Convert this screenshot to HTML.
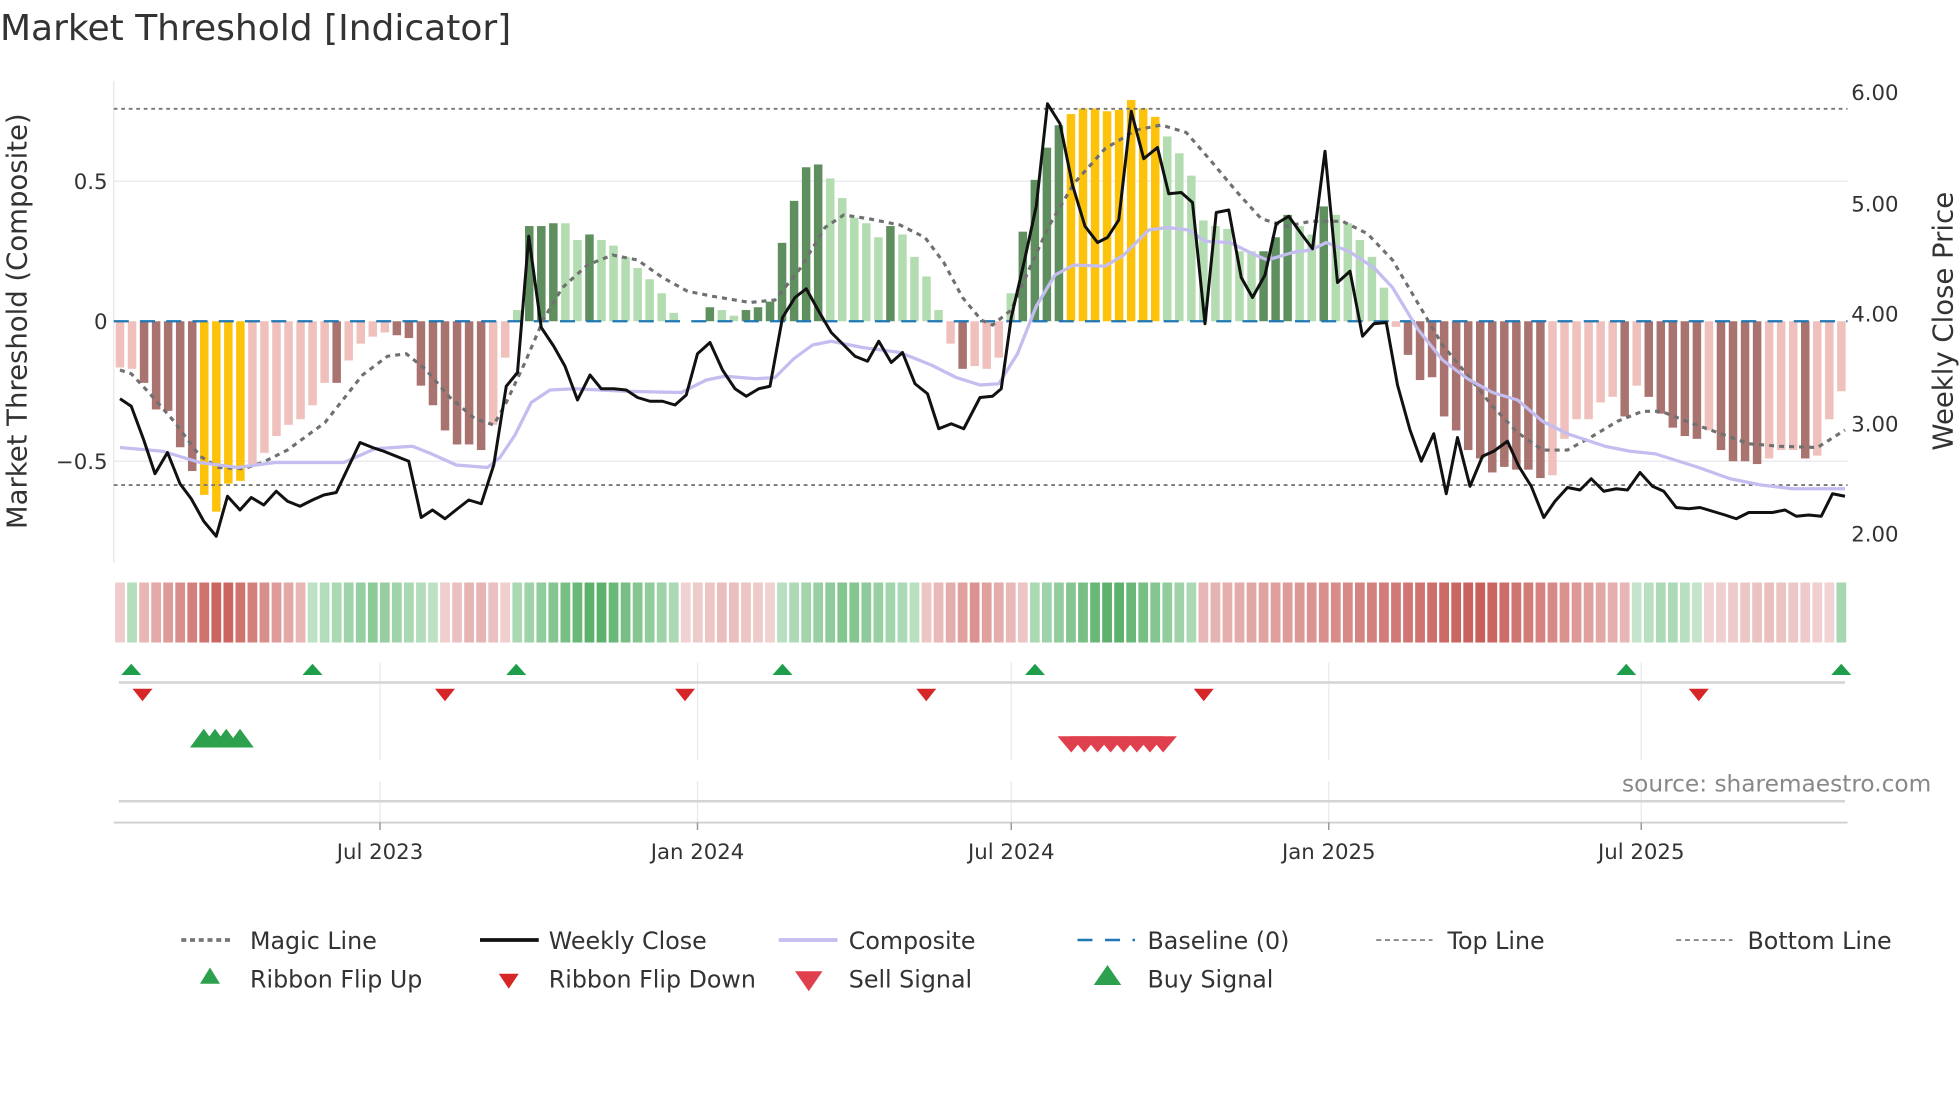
<!DOCTYPE html>
<html><head><meta charset="utf-8">
<style>html,body{margin:0;padding:0;background:#fff;}svg{display:block;}text{font-family:"DejaVu Sans","Liberation Sans",sans-serif;}</style>
</head><body>
<svg id="s" width="1960" height="1102" viewBox="0 0 1568 881.6" xmlns="http://www.w3.org/2000/svg">
<rect width="1568" height="881.6" fill="#fff"/>
<text x="0" y="32" font-size="28.8" fill="#333">Market Threshold [Indicator]</text>
<line x1="91" y1="65" x2="91" y2="450" stroke="#e6e6e6" stroke-width="1"/>
<line x1="91" y1="145" x2="1478" y2="145" stroke="#ebebf2" stroke-width="1.2"/>
<line x1="91" y1="369" x2="1478" y2="369" stroke="#ebebf2" stroke-width="1.2"/>
<g id="bars"></g>
<line x1="91" y1="87" x2="1478" y2="87" stroke="#777" stroke-width="1.5" stroke-dasharray="3,3"/>
<line x1="91" y1="388" x2="1478" y2="388" stroke="#777" stroke-width="1.5" stroke-dasharray="3,3"/>
<line x1="91" y1="257" x2="1478" y2="257" stroke="#1f77b4" stroke-width="1.8" stroke-dasharray="12,9"/>
<g id="lines"></g>
<g font-size="17" fill="#333">
<text x="86" y="151" text-anchor="end">0.5</text>
<text x="86" y="263" text-anchor="end">0</text>
<text x="86" y="375" text-anchor="end">−0.5</text>
<text x="1481" y="80">6.00</text>
<text x="1481" y="169">5.00</text>
<text x="1481" y="257">4.00</text>
<text x="1481" y="345">3.00</text>
<text x="1481" y="433">2.00</text>
</g>
<text transform="translate(21,257) rotate(-90)" text-anchor="middle" font-size="22" fill="#333">Market Threshold (Composite)</text>
<text transform="translate(1562,257) rotate(-90)" text-anchor="middle" font-size="22" fill="#333">Weekly Close Price</text>
<g id="ribbon"></g>
<g stroke="#e8e8ee" stroke-width="1">
<line x1="304" y1="530" x2="304" y2="608"/><line x1="558" y1="530" x2="558" y2="608"/><line x1="809" y1="530" x2="809" y2="608"/><line x1="1063" y1="530" x2="1063" y2="608"/><line x1="1313" y1="530" x2="1313" y2="608"/>
<line x1="304" y1="625" x2="304" y2="658"/><line x1="558" y1="625" x2="558" y2="658"/><line x1="809" y1="625" x2="809" y2="658"/><line x1="1063" y1="625" x2="1063" y2="658"/><line x1="1313" y1="625" x2="1313" y2="658"/>
</g>
<line x1="95" y1="546" x2="1476" y2="546" stroke="#d4d4d4" stroke-width="2"/>
<line x1="95" y1="641" x2="1476" y2="641" stroke="#d4d4d4" stroke-width="2"/>
<line x1="91" y1="658" x2="1478" y2="658" stroke="#cfcfcf" stroke-width="1.5"/>
<g stroke="#999" stroke-width="1.2">
<line x1="304" y1="658" x2="304" y2="664"/><line x1="558" y1="658" x2="558" y2="664"/><line x1="809" y1="658" x2="809" y2="664"/><line x1="1063" y1="658" x2="1063" y2="664"/><line x1="1313" y1="658" x2="1313" y2="664"/>
</g>
<g font-size="17" fill="#333" text-anchor="middle">
<text x="304" y="687">Jul 2023</text><text x="558" y="687">Jan 2024</text><text x="809" y="687">Jul 2024</text><text x="1063" y="687">Jan 2025</text><text x="1313" y="687">Jul 2025</text>
</g>
<g id="tri"></g>
<text x="1545" y="633" text-anchor="end" font-size="18.6" fill="#888">source: sharemaestro.com</text>
<g font-size="19" fill="#333">
<line x1="145" y1="752" x2="187" y2="752" stroke="#777" stroke-width="3" stroke-dasharray="4,3"/>
<text x="200" y="759">Magic Line</text>
<line x1="384" y1="752" x2="431" y2="752" stroke="#111" stroke-width="3"/>
<text x="439" y="759">Weekly Close</text>
<line x1="623" y1="752" x2="670" y2="752" stroke="#c3bdf0" stroke-width="3"/>
<text x="679" y="759">Composite</text>
<line x1="862" y1="752" x2="908" y2="752" stroke="#1f77b4" stroke-width="2" stroke-dasharray="12,10"/>
<text x="918" y="759">Baseline (0)</text>
<line x1="1101" y1="752" x2="1146" y2="752" stroke="#888" stroke-width="1.5" stroke-dasharray="4,3"/>
<text x="1158" y="759">Top Line</text>
<line x1="1341" y1="752" x2="1386" y2="752" stroke="#888" stroke-width="1.5" stroke-dasharray="4,3"/>
<text x="1398" y="759">Bottom Line</text>
<polygon points="160,787 176,787 168,774" fill="#2ca04c"/>
<text x="200" y="790">Ribbon Flip Up</text>
<polygon points="399,779 415,779 407,791" fill="#d62728"/>
<text x="439" y="790">Ribbon Flip Down</text>
<polygon points="636,777 658,777 647,793" fill="#e0404e"/>
<text x="679" y="790">Sell Signal</text>
<polygon points="875,788 897,788 886,772" fill="#2ca04c"/>
<text x="918" y="790">Buy Signal</text>
</g>
</svg>
<script>
var NS="http://www.w3.org/2000/svg";
function el(p,t,a){var e=document.createElementNS(NS,t);for(var k in a)e.setAttribute(k,a[k]);p.appendChild(e);return e;}
var data="p-.165,p-.17,d-.22,d-.315,d-.32,d-.45,d-.535,y-.62,y-.68,y-.58,y-.57,p-.51,p-.47,p-.41,p-.37,p-.35,p-.30,p-.22,d-.22,p-.14,p-.08,p-.055,p-.04,d-.05,d-.06,d-.23,d-.30,d-.39,d-.44,d-.44,d-.46,p-.37,p-.13,l.04,g.34,g.34,g.35,l.35,l.29,g.31,l.29,l.27,l.23,l.19,l.15,l.10,l.03,l0,l0,g.05,l.04,l.02,g.04,g.05,g.07,g.28,g.43,g.55,g.56,l.51,l.44,l.37,l.35,l.30,g.34,l.31,l.23,l.16,l.04,p-.08,d-.17,p-.16,"+
"p-.17,p-.13,l.10,g.32,g.505,g.62,g.70,y.74,y.76,y.76,y.75,y.755,y.79,y.76,y.73,l.66,l.60,l.52,l.36,l.34,l.33,l.25,l.25,g.25,g.30,g.38,l.34,l.31,g.41,l.38,l.35,l.29,l.23,l.12,p-.02,d-.12,d-.21,d-.20,d-.34,d-.39,d-.46,d-.49,d-.54,d-.52,d-.53,d-.53,d-.56,p-.55,p-.42,p-.35,p-.35,p-.29,p-.27,d-.34,p-.23,d-.27,d-.33,d-.38,d-.41,d-.42,p-.39,d-.46,d-.50,d-.50,d-.51,p-.49,p-.46,p-.46,d-.49,p-.48,p-.35,p-.25";
var col={p:"#efc0bc",d:"#a97370",y:"#fdc20a",g:"#5f8f5e",l:"#b3ddb0"};
var arr=data.split(","),N=arr.length,sp=9.63,bw=6.8;
var B=document.getElementById("bars");
for(var i=0;i<N;i++){var t=arr[i][0],v=parseFloat(arr[i].slice(1));var cx=96+i*sp;var y0=257,y1=257-224*v;
 if(Math.abs(y1-y0)<0.5)continue;
 el(B,"rect",{x:cx-bw/2,y:Math.min(y0,y1),width:bw,height:Math.abs(y1-y0),fill:col[t]});}
var segs=[[0,0,-1,.12],[1,1,1,.2],[2,15,-1,.95],[16,26,1,.5],[27,32,-1,.35],[33,46,1,.9],[47,54,-1,.25],[55,66,1,.6],[67,75,-1,.55],[76,89,1,.9],[90,125,-1,.95],[126,131,1,.3],[132,142,-1,.22],[143,143,1,.3]];
var R=document.getElementById("ribbon");
function mix(a,b,t){return "rgb("+[0,1,2].map(function(k){return Math.round(a[k]+(b[k]-a[k])*t)}).join(",")+")";}
segs.forEach(function(s){for(var i=s[0];i<=s[1];i++){var n=s[1]-s[0];var f;
 if(n==0)f=1;else if(s[0]==90){var c=113;f=i<=c?0.3+0.7*(i-90)/(c-90):1-0.7*(i-c)/(125-c);}
 else{var c=(s[0]+s[1])/2;f=1-0.7*Math.abs(i-c)/(n/2+0.01);}
 var it=s[3]*f;var c2;
 if(s[2]<0)c2=mix([244,220,220],[197,88,83],Math.min(1,it));else c2=mix([208,235,214],[72,168,90],Math.min(1,it));
 el(R,"rect",{x:96+i*sp-3.9,y:466,width:7.8,height:48,fill:c2});}});
var L=document.getElementById("lines");
var magic="96,296 105,299 120,315 140,338 160,365 175,374 195,375 210,370 230,360 260,338 290,300 310,285 325,283 340,295 360,318 380,335 395,340 405,322 420,290 435,255 450,230 470,212 490,204 510,208 530,222 550,233 570,237 600,242 620,240 640,215 660,182 675,172 695,175 720,180 740,190 755,210 770,238 785,256 794,260 809,248 824,214 839,181 859,147 884,119 909,104 929,100 949,106 969,129 989,153 1009,175 1029,181 1049,177 1074,177 1094,187 1114,208 1134,242 1154,276 1174,300 1194,325 1214,346 1234,360 1254,360 1274,349 1294,337 1314,329 1329,329 1349,337 1374,346 1399,355 1424,357 1454,358 1476,344";
var comp="96,358 130,361 160,370 190,374 220,370 275,370 300,359 330,357 345,363 365,372 390,374 400,366 412,348 425,322 440,312 460,311 500,313 545,314 565,304 580,301 605,303 620,302 635,287 650,276 665,273 690,278 720,282 745,292 765,302 784,308 799,307 814,283 829,245 844,220 859,212 884,213 899,204 919,184 934,182 951,184 964,193 984,194 1004,204 1014,208 1034,202 1049,200 1061,194 1079,201 1099,214 1114,230 1134,263 1154,288 1174,303 1194,314 1214,320 1234,337 1254,347 1284,357 1304,361 1324,363 1359,374 1384,383 1409,388 1434,391 1476,391";
var close="96,319 105,325 115,352 124,379 134,362 144,387 153,399 163,417 173,429 182,397 192,408 201,398 211,404 221,393 230,401 240,405 250,400 259,396 269,394 279,373 288,354 298,358 307,361 317,365 327,369 337,414 346,408 356,415 366,407 375,400 385,403 395,372 405,309 414,298 423,189 433,262 443,277 452,293 462,320 472,300 481,311 491,311 501,312 510,318 520,321 530,321 540,324 549,316 558,283 568,274 578,296 588,311 597,317 607,311 616,309 626,254 636,238 645,231 655,249 665,266 674,275 684,285 694,289 703,273 713,290 722,282 732,307 742,315 751,343 761,339 771,343 784,318 794,317 801,311 809,254 819,211 829,165 838,83 848,99 858,148 868,181 878,194 886,190 895,176 905,89 915,127 926,118 935,155 945,154 954,162 964,259 973,170 983,168 993,222 1002,238 1012,220 1021,179 1031,173 1041,187 1050,199 1060,121 1070,226 1080,217 1090,269 1099,259 1109,258 1118,308 1128,344 1137,369 1147,347 1157,395 1166,350 1176,389 1186,365 1195,361 1206,353 1215,373 1225,389 1235,414 1244,401 1254,390 1264,392 1273,383 1283,393 1293,391 1302,392 1312,378 1322,389 1331,393 1341,406 1351,407 1360,406 1370,409 1380,412 1389,415 1399,410 1409,410 1418,410 1428,408 1437,413 1447,412 1457,413 1466,395 1476,397";
el(L,"polyline",{points:magic,fill:"none",stroke:"#707070","stroke-width":2.5,"stroke-dasharray":"4,4"});
el(L,"polyline",{points:comp,fill:"none",stroke:"#c3bdf0","stroke-width":2.6,"stroke-linejoin":"round"});
el(L,"polyline",{points:close,fill:"none",stroke:"#111","stroke-width":2.4,"stroke-linejoin":"round"});
var T=document.getElementById("tri");
[105,250,413,626,828,1301,1473].forEach(function(x){el(T,"polygon",{points:(x-8)+",540 "+(x+8)+",540 "+x+",531",fill:"#1e9e4a"});});
[114,356,548,741,963,1359].forEach(function(x){el(T,"polygon",{points:(x-8)+",551 "+(x+8)+",551 "+x+",561",fill:"#d62728"});});
[163,172,181,192].forEach(function(x){el(T,"polygon",{points:(x-11)+",598 "+(x+11)+",598 "+x+",583",fill:"#2ca04c"});});
for(var k=0;k<8;k++){var x=857+k*10.5;el(T,"polygon",{points:(x-11)+",589 "+(x+11)+",589 "+x+",602",fill:"#e0404e"});}
</script>
</body></html>
